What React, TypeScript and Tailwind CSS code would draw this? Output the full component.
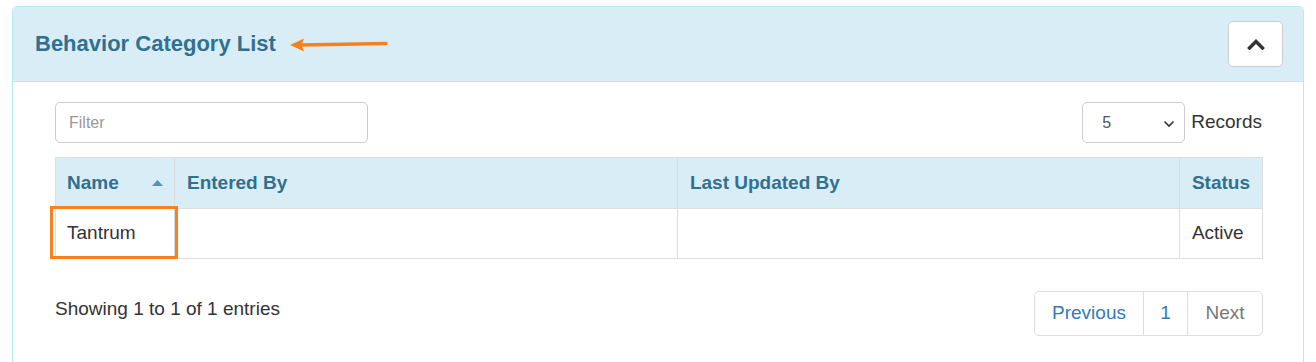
import { useState } from "react";

const font = { fontFamily: '"Liberation Sans", Arial, sans-serif' };

export default function App() {
  const [filter, setFilter] = useState("");
  const [pageSize, setPageSize] = useState("5");

  return (
    <div className="min-h-[362px] bg-white px-[12px] pt-[6px]" style={font}>
      <div className="rounded-t-[5px] border border-b-0 border-[#bce8f1] min-h-[360px]">
        {/* ─── Header ─── */}
        <div className="flex h-[75px] items-center justify-between border-b border-[#bce8f1] bg-[#d9edf7] pl-[22px] pr-[20px] rounded-t-[4px]">
          <div className="flex items-center">
            <h3 className="text-[22px] font-bold text-[#31708f] leading-none">Behavior Category List</h3>
            {/* annotation arrow */}
            <svg width="100" height="16" viewBox="0 0 100 16" className="ml-[14px] mt-[1px]">
              <line x1="10" y1="8" x2="96" y2="6.5" stroke="#f5821f" strokeWidth="3.6" strokeLinecap="round" />
              <polygon points="0,8 14,1.5 11.5,8 14,14.5" fill="#f5821f" />
            </svg>
          </div>
          <button className="flex h-[46px] w-[55px] items-center justify-center rounded-[5px] border border-[#ccc] bg-white">
            <svg width="18" height="12" viewBox="0 0 18 12">
              <path d="M2.5 10 L9 3.5 L15.5 10" stroke="#333" strokeWidth="3.4" fill="none" strokeLinecap="square" />
            </svg>
          </button>
        </div>

        {/* ─── Body ─── */}
        <div className="pl-[42px] pr-[40px] pt-[20px]">
          <div className="flex items-center justify-between">
            <input
              value={filter}
              onChange={(e) => setFilter(e.target.value)}
              placeholder="Filter"
              className="h-[41px] w-[313px] rounded-[5px] border border-[#ccc] px-[13px] text-[16px] text-[#555] outline-none placeholder:text-[#999]"
            />
            <div className="flex items-center gap-[6px]">
              <div className="relative h-[41px] w-[103px] rounded-[5px] border border-[#ccc]">
                <select
                  value={pageSize}
                  onChange={(e) => setPageSize(e.target.value)}
                  className="h-full w-full appearance-none bg-transparent pl-[19px] text-[16px] text-[#555] outline-none"
                >
                  <option>5</option>
                  <option>10</option>
                  <option>25</option>
                </select>
                <svg width="12" height="8" viewBox="0 0 12 8" className="pointer-events-none absolute right-[9px] top-[17px]">
                  <path d="M1.5 1.5 L6 6 L10.5 1.5" stroke="#333" strokeWidth="1.6" fill="none" />
                </svg>
              </div>
              <span className="mr-[1px] text-[19px] text-[#333]">Records</span>
            </div>
          </div>

          <div className="relative mt-[14px]">
            <table className="w-full border-collapse text-[19px] text-[#333]">
              <thead>
                <tr className="h-[51px] bg-[#d9edf7] text-left text-[#31708f]">
                  <th className="w-[119px] border border-[#ddd] px-[11px] font-bold">
                    <div className="flex items-center justify-between">
                      <span>Name</span>
                      <svg width="11" height="6" viewBox="0 0 11 6">
                        <polygon points="0,6 5.5,0 11,6" fill="#5b8fb0" />
                      </svg>
                    </div>
                  </th>
                  <th className="w-[503px] border border-[#ddd] px-[12px] font-bold">Entered By</th>
                  <th className="w-[502px] border border-[#ddd] px-[12px] font-bold">Last Updated By</th>
                  <th className="border border-[#ddd] px-[12px] font-bold">Status</th>
                </tr>
              </thead>
              <tbody>
                <tr className="h-[50px]">
                  <td className="border border-[#ddd] px-[11px]">Tantrum</td>
                  <td className="border border-[#ddd] px-[12px]"></td>
                  <td className="border border-[#ddd] px-[12px]"></td>
                  <td className="border border-[#ddd] px-[12px]">Active</td>
                </tr>
              </tbody>
            </table>
            {/* annotation box */}
            <div className="pointer-events-none absolute left-[-5px] top-[49px] h-[53px] w-[128px] border-[3px] border-[#f5821f]" />
          </div>

          <div className="mt-[33px] flex items-start justify-between">
            <span className="mt-[3px] text-[19px] leading-[27px] text-[#333]">Showing 1 to 1 of 1 entries</span>
            <div className="-mt-[1px] flex h-[45px] overflow-hidden rounded-[5px] border border-[#ddd] text-[19px]">
              <span className="flex w-[109px] items-center justify-center border-r border-[#ddd] text-[#337ab7]">Previous</span>
              <span className="flex w-[44px] items-center justify-center border-r border-[#ddd] text-[#337ab7]">1</span>
              <span className="flex w-[74px] items-center justify-center text-[#777]">Next</span>
            </div>
          </div>
        </div>
      </div>
    </div>
  );
}
